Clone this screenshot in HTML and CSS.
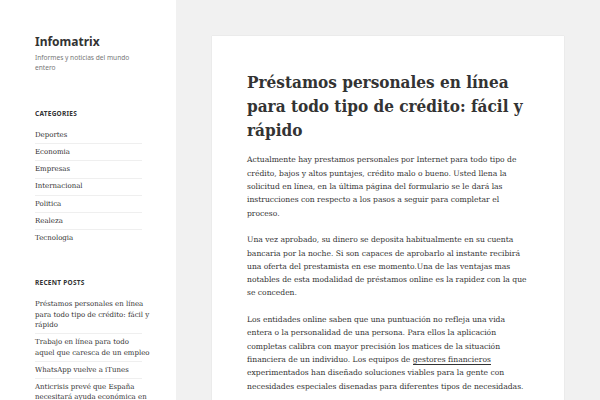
FILE: index.html
```html
<!DOCTYPE html>
<html lang="es">
<head>
<meta charset="utf-8">
<title>Infomatrix</title>
<link rel="stylesheet" href="styles.css">
</head>
<body>
<aside class="sidebar">
  <header class="branding">
    <p class="site-title">Infomatrix</p>
    <p class="site-desc">Informes y noticias del mundo entero</p>
  </header>
  <section class="widget">
    <h2 class="widget-title">Categories</h2>
    <ul class="widget-list">
      <li>Deportes</li>
      <li>Economia</li>
      <li>Empresas</li>
      <li>Internacional</li>
      <li>Politica</li>
      <li>Realeza</li>
      <li>Tecnologia</li>
    </ul>
  </section>
  <section class="widget">
    <h2 class="widget-title">Recent Posts</h2>
    <ul class="widget-list">
      <li>Préstamos personales en línea<br>para todo tipo de crédito: fácil y<br>rápido</li>
      <li>Trabajo en línea para todo<br>aquel que caresca de un empleo</li>
      <li>WhatsApp vuelve a iTunes</li>
      <li>Anticrisis prevé que España<br>necesitará ayuda económica en</li>
    </ul>
  </section>
</aside>
<main class="main">
  <article class="card">
    <h1 class="entry-title">Préstamos personales en línea para todo tipo de crédito: fácil y rápido</h1>
    <div class="entry-content">
      <p>Actualmente hay prestamos personales por Internet para todo tipo de crédito, bajos y altos puntajes, crédito malo o bueno. Usted llena la solicitud en línea, en la última página del formulario se le dará las instrucciones con respecto a los pasos a seguir para completar el proceso.</p>
      <p>Una vez aprobado, su dinero se deposita habitualmente en su cuenta bancaria por la noche. Si son capaces de aprobarlo al instante recibirá una oferta del prestamista en ese momento.Una de las ventajas mas notables de esta modalidad de préstamos online es la rapidez con la que se conceden.</p>
      <p>Los entidades online saben que una puntuación no refleja una vida entera o la personalidad de una persona. Para ellos la aplicación completas calibra con mayor precisión los matices de la situación financiera de un individuo. Los equipos de <a href="#" class="link">gestores financieros</a> experimentados han diseñado soluciones viables para la gente con necesidades especiales disenadas para diferentes tipos de necesidadas.</p>
    </div>
  </article>
</main>
</body>
</html>
```
FILE: styles.css
```css
* { box-sizing: border-box; }
html, body { margin: 0; padding: 0; }
body {
  display: flex;
  align-items: stretch;
  height: 400px;
  overflow: hidden;
  background: #f1f1f1;
  color: #333;
  font-family: "DejaVu Serif", serif;
}
.sidebar {
  width: 176px;
  flex: none;
  background: #fff;
  padding: 35px 34px 0 35px;
}
.branding p { margin: 0; }
.site-title {
  font-family: "Noto Sans", sans-serif;
  font-weight: 700;
  font-size: 12px;
  line-height: 14px;
  color: #333;
}
.site-desc {
  font-family: "Noto Sans", sans-serif;
  font-size: 6.6px;
  line-height: 10px;
  color: #777;
  margin-top: 4px !important;
}
.widget { margin-top: 36px; }
.widget + .widget { margin-top: 32px; }
.widget-title {
  margin: 0 0 8px;
  font-family: "Noto Sans", sans-serif;
  font-weight: 700;
  font-size: 6.5px;
  line-height: 10px;
  letter-spacing: 0.04em;
  text-transform: uppercase;
  color: #333;
}
.widget-list {
  list-style: none;
  margin: 0;
  padding: 0;
}
.widget-list li {
  font-size: 7px;
  line-height: 10.4px;
  padding: 2.9px 0;
  border-top: 1px solid #efefef;
  color: #333;
  white-space: nowrap;
}
.widget-list li:first-child { border-top: 0; }
.main {
  flex: 1;
  padding: 36px 36px 0 36px;
}
.card {
  background: #fff;
  height: 100%;
  box-shadow: 0 0 1px rgba(0,0,0,0.15);
  padding: 33.6px 35px 0 35px;
}
.entry-title {
  margin: 0;
  font-size: 17px;
  line-height: 24.3px;
  font-weight: 700;
  font-stretch: condensed;
  color: #333;
}
.entry-content {
  margin-top: 11px;
  font-size: 7.6px;
  line-height: 13.3px;
}
.entry-content p { margin: 0 0 13.3px; }
.link {
  color: #333;
  text-decoration: none;
  border-bottom: 1px solid #333;
}
```
